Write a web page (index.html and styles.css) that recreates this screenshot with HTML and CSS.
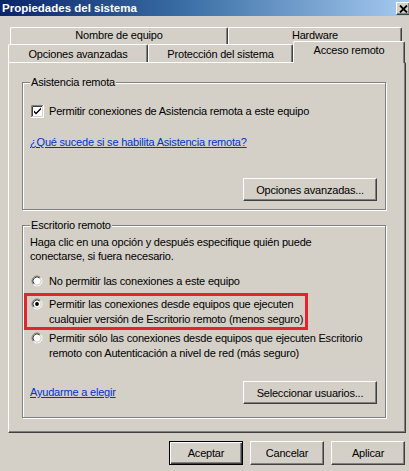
FILE: index.html
```html
<!DOCTYPE html>
<html lang="es">
<head>
<meta charset="utf-8">
<title>Propiedades del sistema</title>
<link rel="stylesheet" href="styles.css">
</head>
<body>
<div class="window">
  <div class="titlebar">
    <span class="title">Propiedades del sistema</span>
    <span class="close"><svg width="9" height="8" viewBox="0 0 9 8"><path d="M1 0.5 L8 7.5 M8 0.5 L1 7.5" stroke="#000" stroke-width="1.8" fill="none"/></svg></span>
  </div>

  <div class="tabs">
    <div class="tabrow row1">
      <div class="tab t-nombre">Nombre de equipo</div>
      <div class="tab t-hardware">Hardware</div>
    </div>
    <div class="tabrow row2">
      <div class="tab t-opciones">Opciones avanzadas</div>
      <div class="tab t-proteccion">Protección del sistema</div>
      <div class="tab t-acceso selected">Acceso remoto</div>
    </div>
  </div>

  <div class="panel">
    <div class="group g-asistencia">
      <div class="group-title">Asistencia remota</div>
      <div class="check-row">
        <span class="checkbox"><svg width="13" height="13" viewBox="0 0 13 13">
          <rect x="0" y="0" width="13" height="13" fill="#ffffff"/>
          <path d="M0.5 12 V0.5 H12" stroke="#808080" fill="none"/>
          <path d="M1.5 11 V1.5 H11" stroke="#404040" fill="none"/>
          <path d="M1 11.5 H11.5 V1" stroke="#d4d0c8" fill="none"/>
          <path d="M3 5.5 L5 7.5 L10 2.5 V4.5 L5 9.5 L3 7.5 Z" fill="#000"/>
        </svg></span>
        <span>Permitir conexiones de Asistencia remota a este equipo</span>
      </div>
      <a class="link link-asis" href="#">¿Qué sucede si se habilita Asistencia remota?</a>
      <div class="btn-row">
        <button class="btn btn-wide">Opciones avanzadas...</button>
      </div>
    </div>

    <div class="group g-escritorio">
      <div class="group-title">Escritorio remoto</div>
      <p class="intro">Haga clic en una opción y después especifique quién puede<br>conectarse, si fuera necesario.</p>

      <div class="radio-row r1">
        <span class="radio"><svg width="12" height="12" viewBox="0 0 12 12">
          <circle cx="6" cy="6" r="4" fill="#fff"/>
          <path d="M2.46 9.54 A5 5 0 0 1 9.54 2.46" stroke="#808080" fill="none"/>
          <path d="M9.54 2.46 A5 5 0 0 1 2.46 9.54" stroke="#fff" fill="none"/>
          <path d="M3.17 8.83 A4 4 0 0 1 8.83 3.17" stroke="#404040" fill="none"/>
          <path d="M8.83 3.17 A4 4 0 0 1 3.17 8.83" stroke="#d4d0c8" fill="none"/>
        </svg></span>
        <span class="rtext">No permitir las conexiones a este equipo</span>
      </div>

      <div class="highlight">
        <div class="radio-row r2">
          <span class="radio"><svg width="12" height="12" viewBox="0 0 12 12">
            <circle cx="6" cy="6" r="4" fill="#fff"/>
            <path d="M2.46 9.54 A5 5 0 0 1 9.54 2.46" stroke="#808080" fill="none"/>
            <path d="M9.54 2.46 A5 5 0 0 1 2.46 9.54" stroke="#fff" fill="none"/>
            <path d="M3.17 8.83 A4 4 0 0 1 8.83 3.17" stroke="#404040" fill="none"/>
            <path d="M8.83 3.17 A4 4 0 0 1 3.17 8.83" stroke="#d4d0c8" fill="none"/>
            <circle cx="6" cy="6" r="1.9" fill="#000"/>
          </svg></span>
          <span class="rtext">Permitir las conexiones desde equipos que ejecuten<br>cualquier versión de Escritorio remoto (menos seguro)</span>
        </div>
      </div>

      <div class="radio-row r3">
        <span class="radio"><svg width="12" height="12" viewBox="0 0 12 12">
          <circle cx="6" cy="6" r="4" fill="#fff"/>
          <path d="M2.46 9.54 A5 5 0 0 1 9.54 2.46" stroke="#808080" fill="none"/>
          <path d="M9.54 2.46 A5 5 0 0 1 2.46 9.54" stroke="#fff" fill="none"/>
          <path d="M3.17 8.83 A4 4 0 0 1 8.83 3.17" stroke="#404040" fill="none"/>
          <path d="M8.83 3.17 A4 4 0 0 1 3.17 8.83" stroke="#d4d0c8" fill="none"/>
        </svg></span>
        <span class="rtext">Permitir sólo las conexiones desde equipos que ejecuten Escritorio<br>remoto con Autenticación a nivel de red (más seguro)</span>
      </div>

      <div class="help-row">
        <a class="link" href="#">Ayudarme a elegir</a>
        <button class="btn btn-wide">Seleccionar usuarios...</button>
      </div>
    </div>
  </div>

  <div class="footer">
    <button class="btn btn-foot default">Aceptar</button>
    <button class="btn btn-foot">Cancelar</button>
    <button class="btn btn-foot">Aplicar</button>
  </div>
</div>
</body>
</html>
```
FILE: styles.css
```css
* { box-sizing: border-box; }

html, body {
  margin: 0;
  padding: 0;
  background: #d4d0c8;
}

body {
  font-family: "Liberation Sans", Arial, sans-serif;
  font-size: 11px;
  line-height: 13px;
  letter-spacing: -0.2px;
  color: #000;
}

.window {
  width: 409px;
  height: 471px;
  overflow: hidden;
  background: #d4d0c8;
}

/* Title bar */
.titlebar {
  height: 16px;
  display: flex;
  align-items: center;
  padding-left: 2px;
  background: linear-gradient(to right, #0a246a 0%, #3a6ea5 45%, #a6caf0 100%);
}

.title {
  color: #fff;
  font-weight: bold;
  font-size: 11.5px;
  line-height: 14px;
  letter-spacing: 0;
}

.close {
  margin-left: auto;
  width: 14px;
  height: 13px;
  margin-top: 1px;
  margin-right: -1px;
  background: #d4d0c8;
  border: 1px solid;
  border-color: #fff #404040 #404040 #fff;
  box-shadow: inset -1px -1px 0 #808080;
  display: flex;
  align-items: center;
  justify-content: center;
}

.close svg { display: block; }

/* Tabs */
.tabs {
  margin-top: 11px;
}

.tabrow {
  display: flex;
}

.row1 {
  padding-left: 10px;
  height: 17px;
}

.row2 {
  padding-left: 8px;
  height: 18px;
}

.tab {
  border-top: 1px solid #fff;
  border-left: 1px solid #fff;
  border-right: 1px solid #404040;
  box-shadow: inset -1px 0 0 #808080;
  text-align: center;
  line-height: 15px;
  border-top-left-radius: 2px;
  border-top-right-radius: 2px;
  background: #d4d0c8;
}

.t-nombre { width: 218px; }
.t-hardware { width: 174px; }
.t-opciones { width: 140px; padding-top: 2px; }
.t-proteccion { width: 145px; padding-top: 2px; }

.t-acceso.selected {
  width: 112px;
  height: 22px;
  margin-top: -3px;
  position: relative;
  z-index: 2;
  line-height: 17px;
}

/* Panel */
.panel {
  margin-left: 8px;
  width: 398px;
  height: 371px;
  border-top: 1px solid #fff;
  border-left: 1px solid #fff;
  border-right: 1px solid #404040;
  border-bottom: 1px solid #404040;
  box-shadow: inset -1px -1px 0 #808080;
  padding: 19px 0 0 13px;
  display: flex;
  flex-direction: column;
  gap: 15px;
}

.group {
  width: 364px;
  border: 1px solid #808080;
  box-shadow: 1px 1px 0 #fff, inset 1px 1px 0 #fff;
  padding: 0 0 0 7px;
  display: flex;
  flex-direction: column;
  align-items: flex-start;
}

.g-asistencia { height: 128px; }
.g-escritorio { height: 193px; }

.group-title {
  margin: -7px 0 0 0;
  padding: 0 1px;
  line-height: 13px;
  background: #d4d0c8;
}

.check-row {
  margin-top: 16px;
  margin-left: 1px;
  display: flex;
  align-items: center;
  gap: 5px;
  line-height: 13px;
}

.checkbox svg, .radio svg { display: block; }

.link {
  color: #0033cc;
  text-decoration: underline;
  line-height: 13px;
}

.link-asis {
  margin-top: 18px;
}

.btn-row {
  align-self: stretch;
  display: flex;
  justify-content: flex-end;
  margin-top: 29px;
  padding-right: 8px;
}

.btn {
  font-family: "Liberation Sans", Arial, sans-serif;
  font-size: 11px;
  letter-spacing: inherit;
  color: #000;
  background: #d4d0c8;
  border: 1px solid;
  border-color: #fff #404040 #404040 #fff;
  box-shadow: inset -1px -1px 0 #808080;
  padding: 0;
  margin: 0;
}

.btn-wide {
  width: 134px;
  height: 23px;
}

.intro {
  margin: 3px 0 0 0;
  line-height: 14px;
}

.radio-row {
  display: flex;
  align-items: flex-start;
  gap: 6px;
  line-height: 15px;
}

.rtext {
  white-space: nowrap;
}

.radio-row .radio {
  margin-top: 1px;
}

.r1 {
  margin-top: 11px;
  margin-left: 1px;
  line-height: 14px;
}

.highlight {
  margin-top: 5px;
  margin-left: -6px;
  width: 284px;
  height: 37px;
  border: 3px solid #e1242e;
  padding: 1px 0 0 4px;
}

.r2 { margin-left: 0; }

.r3 {
  margin-top: 1px;
  margin-left: 1px;
}

.help-row {
  align-self: stretch;
  margin-top: 20px;
  padding-right: 8px;
  display: flex;
  align-items: center;
  justify-content: space-between;
}

/* Footer buttons */
.footer {
  display: flex;
  justify-content: flex-end;
  gap: 7px;
  margin-top: 8px;
  padding-right: 4px;
}

.btn-foot {
  width: 74px;
  height: 24px;
}

.btn-foot.default {
  border: 1px solid #000;
  box-shadow: inset 1px 1px 0 #fff, inset -1px -1px 0 #404040, inset -2px -2px 0 #808080;
}
```
